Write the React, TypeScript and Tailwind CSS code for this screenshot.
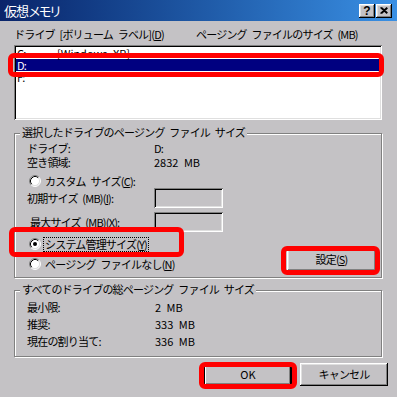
import React from "react";

const raised =
  "shadow-[inset_-1px_-1px_0_#000,inset_1px_1px_0_#fff,inset_-2px_-2px_0_#808080,inset_2px_2px_0_#dfdfdf]";
const sunken =
  "shadow-[inset_1px_1px_0_#808080,inset_-1px_-1px_0_#fff,inset_2px_2px_0_#000,inset_-2px_-2px_0_#dfdfdf]";

function Radio({ checked }: { checked?: boolean }) {
  return (
    <svg width="12" height="12" viewBox="0 0 12 12" className="shrink-0">
      <circle cx="6" cy="6" r="5" fill="#fff" />
      <path d="M2.11 9.89 A5.5 5.5 0 0 1 9.89 2.11" fill="none" stroke="#808080" strokeWidth="1" />
      <path d="M9.89 2.11 A5.5 5.5 0 0 1 2.11 9.89" fill="none" stroke="#fff" strokeWidth="1" />
      <path d="M2.82 9.18 A4.5 4.5 0 0 1 9.18 2.82" fill="none" stroke="#000" strokeWidth="1" />
      <path d="M9.18 2.82 A4.5 4.5 0 0 1 2.82 9.18" fill="none" stroke="#dfdfdf" strokeWidth="1" />
      {checked && <circle cx="6" cy="6" r="2" fill="#000" />}
    </svg>
  );
}

function Group({ label, children, className }: { label: string; children: React.ReactNode; className?: string }) {
  return (
    <div
      className={
        "relative border border-[#808080] shadow-[inset_1px_1px_0_#fff,1px_1px_0_#fff] pl-[12px] " +
        (className ?? "")
      }
    >
      <span className="absolute -top-[8px] left-[5px] bg-[#c4c2c5] px-[2px] leading-[13px]">{label}</span>
      {children}
    </div>
  );
}

export default function App() {
  return (
    <div className="relative w-[397px] h-[397px] overflow-hidden bg-[#c4c2c5] font-['Noto_Sans_CJK_JP',sans-serif] text-[11px] leading-[13px] tracking-[-0.8px] [word-spacing:3px] text-black">
      {/* Title bar */}
      <div className="flex h-[21px] items-center bg-linear-to-r from-[#0a246a] to-[#3a90e4] pl-[4px] pr-[5px]">
        <span className="text-white text-[13px] leading-[16px] tracking-[-1px]">
          仮想<span className="tracking-[-2.5px]">メモリ</span>
        </span>
        <div className="ml-auto flex gap-[1px]">
          <div className={"flex h-[14px] w-[16px] items-center justify-center bg-[#c4c2c5] " + raised}>
            <span className="text-[12px] font-bold leading-[12px] tracking-normal font-['Liberation_Sans',sans-serif]">?</span>
          </div>
          <div className={"flex h-[14px] w-[16px] items-center justify-center bg-[#c4c2c5] " + raised}>
            <svg width="8" height="7" viewBox="0 0 8 7">
              <path d="M0.5 0.5 L7 6.5 M1.5 0.5 L7.5 6 M7 0.5 L0.5 6.5 M7.5 1 L1.5 6.5" stroke="#000" strokeWidth="1.2" />
            </svg>
          </div>
        </div>
      </div>

      {/* Content */}
      <div className="w-[382px] pl-[14px]">
        <div className="mt-[7px] flex h-[13px]">
          <span className="w-[182px]">
            ドライブ [ボリューム ラベル](<u>D</u>)
          </span>
          <span>ページング ファイルのサイズ (MB)</span>
        </div>

        <div className={"mt-[4px] h-[75px] bg-white p-[2px] " + sunken}>
          <div className="flex h-[12px] pl-[1px] leading-[12px]">
            <span className="w-[40px]">C:</span>
            <span className="tracking-normal">[Windows XP]</span>
          </div>
          <div className="flex h-[12px] bg-[#000080] pl-[1px] leading-[12px] text-white">
            <span className="w-[40px]">D:</span>
          </div>
          <div className="flex h-[12px] pl-[1px] leading-[12px]">
            <span className="w-[40px]">F:</span>
          </div>
        </div>

        <Group label="選択したドライブのページング ファイル サイズ" className="mt-[13px] pt-[7px] pb-[3px]">
          <div className="flex h-[14px] items-center">
            <span className="w-[127px]">ドライブ:</span>
            <span>D:</span>
          </div>
          <div className="flex h-[14px] items-center">
            <span className="w-[127px]">空き領域:</span>
            <span className="tracking-normal">2832 MB</span>
          </div>
          <div className="mt-[5px] flex h-[14px] items-center pl-[2px]">
            <Radio />
            <span className="ml-[4px]">
              カスタム サイズ(<u>C</u>):
            </span>
          </div>
          <div className="flex h-[20px] items-center">
            <span className="w-[127px]">
              初期サイズ (MB)(<u>I</u>):
            </span>
            <div className={"h-[20px] w-[69px] " + sunken}></div>
          </div>
          <div className="mt-[4px] flex h-[20px] items-center">
            <span className="w-[127px] pl-[3px]">
              最大サイズ (MB)(<u>X</u>):
            </span>
            <div className={"h-[20px] w-[69px] " + sunken}></div>
          </div>
          <div className="mt-[2px] flex">
            <div className="flex flex-col">
              <div className="flex h-[20px] items-center pl-[2px]">
                <Radio checked />
                <span className="ml-[2px] border border-dotted border-black px-[1px] leading-[13px]">
                  システム管理サイズ(<u>Y</u>)
                </span>
              </div>
              <div className="flex h-[20px] items-center pl-[2px]">
                <Radio />
                <span className="ml-[4px]">
                  ページング ファイルなし(<u>N</u>)
                </span>
              </div>
            </div>
            <div
              className={
                "ml-auto mr-[5px] mt-[14px] flex h-[23px] w-[89px] items-center justify-center bg-[#c4c2c5] " + raised
              }
            >
              設定(<u>S</u>)
            </div>
          </div>
        </Group>

        <Group label="すべてのドライブの総ページング ファイル サイズ" className="mt-[12px] pt-[8px] pb-[6px]">
          <div className="flex h-[17px] items-center">
            <span className="w-[128px]">最小限:</span>
            <span className="tracking-normal">2 MB</span>
          </div>
          <div className="flex h-[17px] items-center">
            <span className="w-[128px]">推奨:</span>
            <span className="tracking-normal">333 MB</span>
          </div>
          <div className="flex h-[17px] items-center">
            <span className="w-[128px]">現在の割り当て:</span>
            <span className="tracking-normal">336 MB</span>
          </div>
        </Group>
      </div>

      <div className="mt-[6px] flex justify-end gap-[8px] pr-[9px]">
        <div
          className={
            "flex h-[23px] w-[88px] items-center justify-center bg-[#c4c2c5] tracking-normal shadow-[inset_-1px_-1px_0_#000,inset_1px_1px_0_#000,inset_-2px_-2px_0_#000,inset_2px_2px_0_#fff,inset_-3px_-3px_0_#808080]"
          }
        >
          OK
        </div>
        <div className={"flex h-[23px] w-[88px] items-center justify-center bg-[#c4c2c5] " + raised}>
          キャンセル
        </div>
      </div>

      {/* Red highlight annotations */}
      <div className="pointer-events-none absolute left-[8px] top-[53px] h-[24px] w-[376px] rounded-[6px] border-[5px] border-[#ff0000]" />
      <div className="pointer-events-none absolute left-[9px] top-[227px] h-[30px] w-[175px] rounded-[6px] border-[5px] border-[#ff0000]" />
      <div className="pointer-events-none absolute left-[281px] top-[246px] h-[29px] w-[99px] rounded-[6px] border-[5px] border-[#ff0000]" />
      <div className="pointer-events-none absolute left-[199px] top-[362px] h-[27px] w-[98px] rounded-[6px] border-[5px] border-[#ff0000]" />
    </div>
  );
}
